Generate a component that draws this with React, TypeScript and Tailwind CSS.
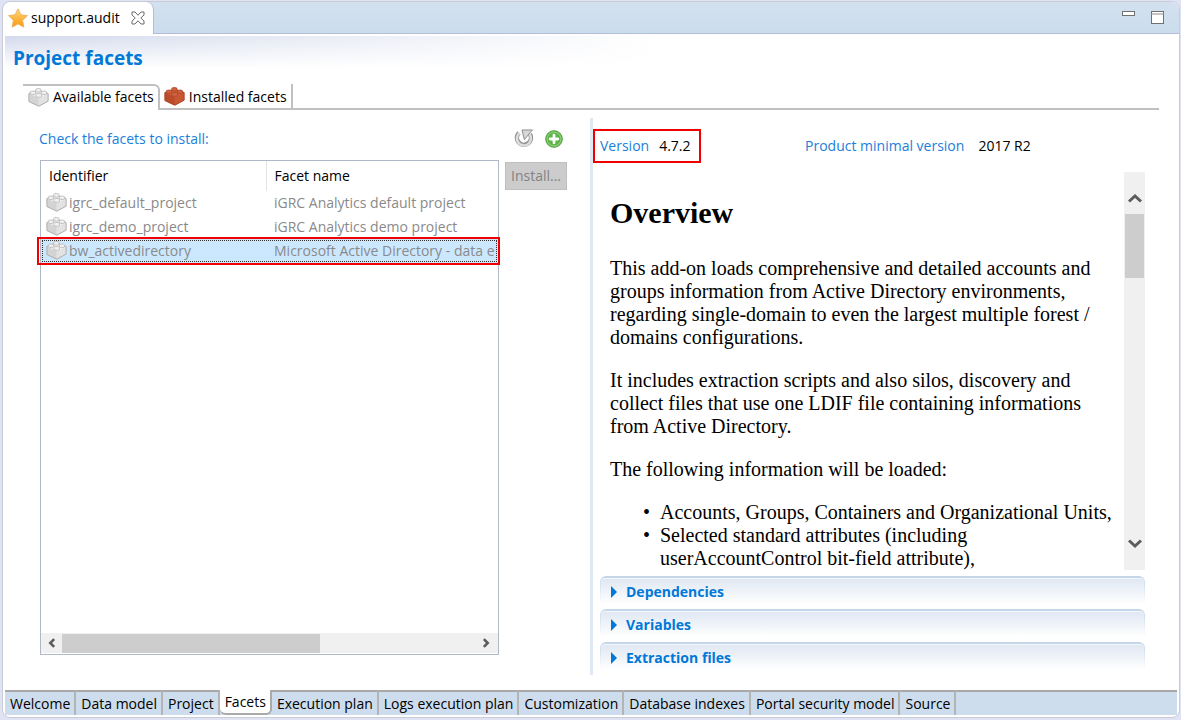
import React, { useState } from "react";

function Brick({ red = false }: { red?: boolean }) {
  const top = red ? "#d0623e" : "#f1f1f1";
  const left = red ? "#bb4c2b" : "#d4d4d4";
  const right = red ? "#c85733" : "#e2e2e2";
  const edge = red ? "#a94526" : "#adadad";
  const rim = red ? "#a94526" : "#b4b4b4";
  return (
    <svg viewBox="0 0 21 19" className="h-[19px] w-[21px] shrink-0" aria-hidden="true">
      <g strokeLinejoin="round">
        <path d="M.9 5.6 10.3 1.9 20.1 5.6v7.6L10.8 18.2.9 13.6z" fill={top} />
        <path d="M.9 5.6 10.8 10v8.2L.9 13.6z" fill={left} />
        <path d="M10.8 10 20.1 5.6v7.6l-9.3 5z" fill={right} />
        <path d="M.9 5.6 10.3 1.9 20.1 5.6v7.6L10.8 18.2.9 13.6z" fill="none" stroke={edge} strokeWidth="1" />
        <g fill={top} stroke={rim} strokeWidth=".8">
          <path d="M7.8 3.2V1.4c0-1.1 5.2-1.1 5.2 0v1.8c0 1.2-5.2 1.2-5.2 0z" />
          <path d="M2.3 5.6V3.9c0-1.1 5.2-1.1 5.2 0v1.7c0 1.2-5.2 1.2-5.2 0z" />
          <path d="M13.4 5.6V3.9c0-1.1 5.2-1.1 5.2 0v1.7c0 1.2-5.2 1.2-5.2 0z" />
          <path d="M7.9 8.3V6.4c0-1.2 5.6-1.2 5.6 0v1.9c0 1.3-5.6 1.3-5.6 0z" />
        </g>
      </g>
    </svg>
  );
}

function Star() {
  return (
    <svg viewBox="0 0 20 20" className="h-5 w-5 shrink-0" aria-hidden="true">
      <defs>
        <linearGradient id="star" x1="0" y1="0" x2="0" y2="1">
          <stop offset="0" stopColor="#ffd97c" />
          <stop offset="1" stopColor="#f8980c" />
        </linearGradient>
      </defs>
      <path
        d="M10 .8 12.9 6.8l6.6.8-4.9 4.7 1.3 6.9-5.9-3.3-5.9 3.3 1.3-6.9L.5 7.6l6.6-.8z"
        fill="url(#star)"
        stroke="#eeb25c"
        strokeWidth=".9"
        strokeLinejoin="round"
      />
    </svg>
  );
}

function Chevron({ d, className }: { d: string; className: string }) {
  return (
    <svg viewBox="0 0 14 14" className={className} aria-hidden="true">
      <path d={d} fill="none" stroke="#5c5c5c" strokeWidth="3" />
    </svg>
  );
}

const facets = [
  { id: "igrc_default_project", name: "iGRC Analytics default project" },
  { id: "igrc_demo_project", name: "iGRC Analytics demo project" },
  { id: "bw_activedirectory", name: "Microsoft Active Directory - data e" },
];

const pages = [
  "Welcome",
  "Data model",
  "Project",
  "Facets",
  "Execution plan",
  "Logs execution plan",
  "Customization",
  "Database indexes",
  "Portal security model",
  "Source",
];

const sections = ["Dependencies", "Variables", "Extraction files"];

function FacetTable() {
  const [selected, setSelected] = useState("bw_activedirectory");
  return (
    <div className="relative min-h-0 min-w-0 flex-1">
      <div className="flex h-full flex-col overflow-hidden border border-[#b0b8c8] bg-white">
        <div className="min-h-0 flex-1 overflow-hidden">
          <table className="w-full table-fixed border-collapse text-left">
            <thead>
              <tr className="h-[30px]">
                <th className="w-[225px] border-r border-[#e3e3e3] p-0 pl-2 font-normal">Identifier</th>
                <th className="p-0 pl-2 font-normal">Facet name</th>
              </tr>
            </thead>
            <tbody className="text-[#8a8a8a]">
              {facets.map((f) => (
                <tr
                  key={f.id}
                  onClick={() => setSelected(f.id)}
                  className={
                    f.id === selected
                      ? "h-6 bg-[#cce8ff] outline-1 -outline-offset-2 outline-dotted outline-[#333]"
                      : "h-6"
                  }
                >
                  <td className="p-0 pl-[5px]">
                    <span className="flex h-6 items-center gap-[2px]">
                      <span className="pb-[2px]">
                        <Brick />
                      </span>
                      {f.id}
                    </span>
                  </td>
                  <td className="overflow-hidden p-0 pl-2 whitespace-nowrap">{f.name}</td>
                </tr>
              ))}
            </tbody>
          </table>
        </div>
        <div className="mb-px flex h-5 items-center bg-[#f0f0f0] pr-1">
          <button aria-label="Scroll left" className="flex w-[21px] justify-center">
            <Chevron d="M9.5 2.5 5 7l4.5 4.5" className="h-3 w-3" />
          </button>
          <div className="h-[19px] w-[57%] bg-[#cdcdcd]" />
          <button aria-label="Scroll right" className="ml-auto flex w-4 justify-center">
            <Chevron d="M4.5 2.5 9 7l-4.5 4.5" className="h-3 w-3" />
          </button>
        </div>
      </div>
      <div className="pointer-events-none absolute top-[77px] -right-px -left-[3px] h-7 border-2 border-[#f00000]" />
    </div>
  );
}

export default function App() {
  return (
    <div className="flex h-screen flex-col bg-[#dfe3f4] pt-px pr-px pb-[2px] pl-[2px] font-['Open_Sans','Noto_Sans',sans-serif] text-[14px] leading-5 text-black">
      <div className="flex min-h-0 flex-1 flex-col rounded-lg border border-[#c9ccd6] bg-white">
        <header className="flex h-8 shrink-0 rounded-t-lg border-b border-[#b4bdd6] bg-linear-to-b from-[#d3e1ef] to-[#cbdcec]">
          <div className="-mb-px flex items-center gap-[3px] rounded-t-lg border-r border-[#b4bdd6] bg-white pr-2 pl-[5px]">
            <Star />
            <span>support.audit</span>
            <button aria-label="Close" className="ml-2">
              <svg viewBox="0 0 14 14" className="h-[14px] w-[14px]">
                <path
                  d="M1 1h3l3 3.2L10 1h3v3L9.8 7l3.2 3v3h-3L7 9.8 4 13H1v-3l3.2-3L1 4z"
                  fill="#fff"
                  stroke="#6c6c6c"
                  strokeWidth="1"
                />
              </svg>
            </button>
          </div>
          <div className="ml-auto flex items-start gap-4 pt-[9px] pr-[15px]">
            <button aria-label="Minimize">
              <svg viewBox="0 0 13 5" className="h-[5px] w-[13px]">
                <rect x=".5" y=".5" width="12" height="4" fill="#fff" stroke="#707070" />
              </svg>
            </button>
            <button aria-label="Maximize">
              <svg viewBox="0 0 13 13" className="h-[13px] w-[13px]">
                <rect x=".5" y=".5" width="12" height="12" fill="#fff" stroke="#707070" />
                <path d="M0 3h13" stroke="#8a8a8a" />
              </svg>
            </button>
          </div>
        </header>

        <main className="mx-[2px] mt-[2px] flex min-h-0 flex-1 flex-col">
          <div className="h-12 shrink-0 bg-[linear-gradient(to_right,transparent,white_56%),linear-gradient(to_bottom,#d3daec,white_32px)] pt-2 pl-2">
            <h1 className="text-[19px] leading-7 font-bold text-[#0078d7]">Project facets</h1>
          </div>

          <nav className="mr-[18px] ml-[18px] flex h-[26px] shrink-0">
            <button className="flex items-center gap-1 rounded-tr-md border-t-2 border-r-2 border-[#c0c0c0] pr-1 pb-[2px] pl-[5px] whitespace-nowrap">
              <Brick />
              Available facets
            </button>
            <button className="flex items-center gap-1 border-b-2 border-[#c0c0c0] pl-1 whitespace-nowrap">
              <Brick red />
              <span className="flex h-full items-center border-r-2 border-[#c0c0c0] pt-[2px] pr-1">
                Installed facets
              </span>
            </button>
            <div className="flex-1 border-b-2 border-[#c0c0c0]" />
          </nav>

          <div className="flex min-h-0 flex-1 pt-2 pr-8 pb-[15px] pl-[34px]">
            <section className="flex w-1/2 max-w-[528px] shrink-0 flex-col">
              <div className="flex h-[42px] shrink-0 items-center">
                <span className="text-[#1a80dc]">Check the facets to install:</span>
                <button aria-label="Refresh" className="ml-auto">
                  <svg viewBox="0 0 20 20" className="h-5 w-5">
                    <path d="M5 3.8a7 7 0 1 0 11 1.4" fill="none" stroke="#949494" strokeWidth="4.6" />
                    <path d="M5.4 4.1a7 7 0 1 0 10.2 1.2" fill="none" stroke="#dcdcdc" strokeWidth="2.6" />
                    <path d="M8 1h10.4l-1.8 2-6.2 7.6z" fill="#d8d8d8" stroke="#8c8c8c" strokeLinejoin="round" />
                  </svg>
                </button>
                <button aria-label="Add" className="mr-1 ml-[11px]">
                  <svg viewBox="0 0 18 18" className="h-[18px] w-[18px]">
                    <circle cx="9" cy="9" r="8.3" fill="#5eb548" stroke="#4b9e3a" />
                    <circle cx="9" cy="9" r="7" fill="none" stroke="#9bd488" />
                    <path d="M9 5.2v7.6M5.2 9h7.6" stroke="#fff" strokeWidth="2.8" strokeLinecap="round" />
                  </svg>
                </button>
              </div>
              <div className="flex min-h-0 flex-1 items-stretch gap-[6px] pb-5 pl-px">
                <FacetTable />
                <button
                  disabled
                  className="mt-[2px] h-7 w-[62px] border border-[#bfbfbf] bg-[#cccccc] text-[#838383]"
                >
                  Install...
                </button>
              </div>
            </section>

            <div className="ml-[23px] w-[3px] shrink-0 bg-[#dfe9f5]" />

            <section className="flex min-w-0 flex-1 flex-col">
              <div className="mt-[11px] flex h-[34px] shrink-0 items-center">
                <div className="flex h-full w-[108px] items-center gap-[10px] border-2 border-[#f00000] pl-[5px]">
                  <span className="text-[#1a80dc]">Version</span>
                  <span>4.7.2</span>
                </div>
                <div className="ml-[104px] flex gap-[14px] whitespace-nowrap">
                  <span className="text-[#1a80dc]">Product minimal version</span>
                  <span>2017 R2</span>
                </div>
              </div>

              <div className="mt-[9px] flex min-h-0 flex-1">
                <article className="min-w-0 flex-1 overflow-hidden pl-[17px] font-['Liberation_Serif',serif] text-[20px] leading-[23px]">
                  <h2 className="mt-6 text-[30px] leading-[34px] font-bold">Overview</h2>
                  <p className="mt-[27px]">
                    This add-on loads comprehensive and detailed accounts and groups information from Active Directory
                    environments, regarding single-domain to even the largest multiple forest / domains configurations.
                  </p>
                  <p className="mt-5">
                    It includes extraction scripts and also silos, discovery and collect files that use one LDIF file
                    containing informations from Active Directory.
                  </p>
                  <p className="mt-5">The following information will be loaded:</p>
                  <ul className="mt-5 list-['•__'] pl-[50px]">
                    <li>Accounts, Groups, Containers and Organizational Units,</li>
                    <li>Selected standard attributes (including userAccountControl bit-field attribute),</li>
                  </ul>
                </article>
                <div className="flex w-[21px] shrink-0 flex-col items-center bg-[#f0f0f0] pt-5 pb-5">
                  <button aria-label="Scroll up">
                    <Chevron d="M1 9.5 7 4l6 5.5" className="h-[14px] w-[14px]" />
                  </button>
                  <div className="mt-2 h-16 w-[19px] bg-[#cdcdcd]" />
                  <button aria-label="Scroll down" className="mt-auto">
                    <Chevron d="M1 4.5 7 10l6-5.5" className="h-[14px] w-[14px]" />
                  </button>
                </div>
              </div>

              <div className="mt-[6px] flex shrink-0 flex-col gap-[5px] pb-[5px] pl-[7px]">
                {sections.map((s) => (
                  <button
                    key={s}
                    className="rounded-t-md bg-linear-to-b from-[#c3d5e8] to-white px-px pt-[2px] text-left font-bold text-[#0078d7]"
                  >
                    <span className="flex h-[26px] items-center gap-[9px] rounded-t-sm border-t border-[#f3f7fb] bg-linear-to-b from-[#e0e8f3] to-white pl-[10px]">
                      <svg viewBox="0 0 6 12" className="h-3 w-[6px]" aria-hidden="true">
                        <path d="M0 0 6 6 0 12z" fill="#0078d7" />
                      </svg>
                      {s}
                    </span>
                  </button>
                ))}
              </div>
            </section>
          </div>

          <footer className="mb-[2px] flex h-[25px] shrink-0 bg-[#cddded]">
            {pages.map((p) =>
              p === "Facets" ? (
                <button
                  key={p}
                  className="rounded-b-md border-r-2 border-b-2 border-[#aaa] bg-white pr-1 pl-[5px] whitespace-nowrap"
                >
                  {p}
                </button>
              ) : (
                <button
                  key={p}
                  className="border-t-2 border-r-2 border-t-[#a8a8a8] border-r-[#b4b4b4] pr-1 pl-[5px] whitespace-nowrap"
                >
                  {p}
                </button>
              ),
            )}
            <div className="flex-1 border-t-2 border-[#a8a8a8]" />
          </footer>
        </main>
      </div>
    </div>
  );
}
